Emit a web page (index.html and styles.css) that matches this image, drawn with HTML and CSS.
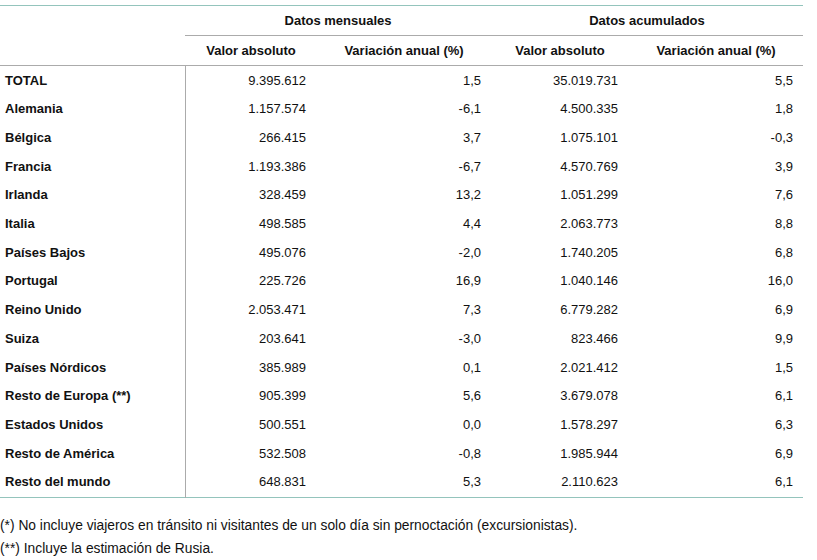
FILE: index.html
```html
<!DOCTYPE html>
<html lang="es">
<head>
<meta charset="utf-8">
<link rel="stylesheet" href="styles.css">
</head>
<body>
<div class="page">
<table class="data">
  <colgroup>
    <col class="c-name"><col class="c-v1"><col class="c-p1"><col class="c-v2"><col class="c-p2">
  </colgroup>
  <thead>
    <tr class="h1">
      <th></th>
      <th colspan="2" class="grp">Datos mensuales</th>
      <th colspan="2" class="grp">Datos acumulados</th>
    </tr>
    <tr class="h2">
      <th></th>
      <th>Valor absoluto</th>
      <th>Variación anual (%)</th>
      <th>Valor absoluto</th>
      <th>Variación anual (%)</th>
    </tr>
  </thead>
  <tbody>
    <tr><td class="name">TOTAL</td><td>9.395.612</td><td>1,5</td><td>35.019.731</td><td>5,5</td></tr>
    <tr><td class="name">Alemania</td><td>1.157.574</td><td>-6,1</td><td>4.500.335</td><td>1,8</td></tr>
    <tr><td class="name">Bélgica</td><td>266.415</td><td>3,7</td><td>1.075.101</td><td>-0,3</td></tr>
    <tr><td class="name">Francia</td><td>1.193.386</td><td>-6,7</td><td>4.570.769</td><td>3,9</td></tr>
    <tr><td class="name">Irlanda</td><td>328.459</td><td>13,2</td><td>1.051.299</td><td>7,6</td></tr>
    <tr><td class="name">Italia</td><td>498.585</td><td>4,4</td><td>2.063.773</td><td>8,8</td></tr>
    <tr><td class="name">Países Bajos</td><td>495.076</td><td>-2,0</td><td>1.740.205</td><td>6,8</td></tr>
    <tr><td class="name">Portugal</td><td>225.726</td><td>16,9</td><td>1.040.146</td><td>16,0</td></tr>
    <tr><td class="name">Reino Unido</td><td>2.053.471</td><td>7,3</td><td>6.779.282</td><td>6,9</td></tr>
    <tr><td class="name">Suiza</td><td>203.641</td><td>-3,0</td><td>823.466</td><td>9,9</td></tr>
    <tr><td class="name">Países Nórdicos</td><td>385.989</td><td>0,1</td><td>2.021.412</td><td>1,5</td></tr>
    <tr><td class="name">Resto de Europa (**)</td><td>905.399</td><td>5,6</td><td>3.679.078</td><td>6,1</td></tr>
    <tr><td class="name">Estados Unidos</td><td>500.551</td><td>0,0</td><td>1.578.297</td><td>6,3</td></tr>
    <tr><td class="name">Resto de América</td><td>532.508</td><td>-0,8</td><td>1.985.944</td><td>6,9</td></tr>
    <tr><td class="name">Resto del mundo</td><td>648.831</td><td>5,3</td><td>2.110.623</td><td>6,1</td></tr>
  </tbody>
</table>
<div class="notes">
  <p>(*) No incluye viajeros en tránsito ni visitantes de un solo día sin pernoctación (excursionistas).</p>
  <p>(**) Incluye la estimación de Rusia.</p>
</div>
</div>
</body>
</html>
```
FILE: styles.css
```css
html, body {
  margin: 0;
  padding: 0;
  background: #fff;
}
body {
  font-family: "Liberation Sans", Arial, sans-serif;
  font-size: 13px;
  color: #111;
}
.page {
  padding-top: 5px;
}
.data {
  border-collapse: collapse;
  width: 803px;
  table-layout: fixed;
  border-top: 1px solid #94c4bc;
  border-bottom: 1px solid #94c4bc;
}
.c-name { width: 185px; }
.c-v1 { width: 132px; }
.c-p1 { width: 174px; }
.c-v2 { width: 138px; }
.c-p2 { width: 174px; }

.data th {
  font-weight: bold;
  text-align: center;
  padding: 0;
  height: 29px;
  line-height: 15px;
}
.data .h1 th.grp {
  border-bottom: 1px solid #ababab;
}
.data .h2 th {
  border-bottom: 1px solid #ababab;
}
.data td {
  text-align: right;
  padding: 7.5px 11px 6.5px 0;
  line-height: 14.7px;
  white-space: nowrap;
}
.data td.name {
  text-align: left;
  font-weight: bold;
  padding-left: 5px;
  border-right: 1px solid #ababab;
}
.data td:nth-child(3),
.data td:nth-child(5) {
  padding-right: 10px;
}
.notes {
  margin-top: 16px;
  font-size: 13.8px;
}
.notes p {
  margin: 0;
  line-height: 23px;
}
```
